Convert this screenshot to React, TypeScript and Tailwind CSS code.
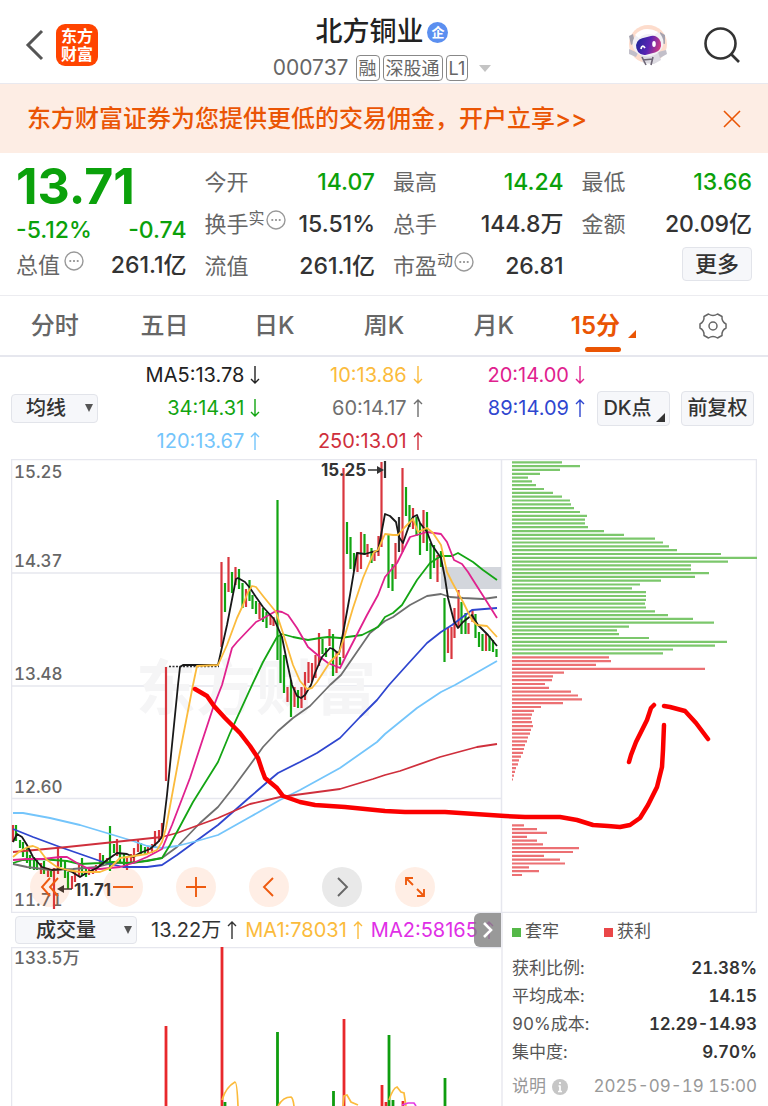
import type { ReactNode } from "react";

const GREEN = "#12a512";
const RED = "#d9363e";

/* Candles as [x, high, low] */
const redCandles: number[][] = [
  [13, 825, 842], [41, 863, 874], [48, 868, 877], [54, 868, 909], [58, 847, 874], [72, 876, 889],
  [75, 872, 882], [79, 865, 877], [89, 867, 875], [93, 867, 874], [96, 865, 873], [100, 853, 867],
  [107, 858, 865], [117, 839, 856], [127, 857, 870], [131, 854, 862], [134, 848, 862], [138, 839, 852],
  [148, 847, 854], [152, 844, 853], [155, 831, 847], [159, 830, 842], [162, 823, 838], [166, 667, 781],
  [221.5, 562, 647], [228.5, 557, 592], [235.5, 567, 585], [246, 589, 607], [259.5, 603, 619],
  [270.5, 615, 625], [273.5, 617, 626], [287.5, 687, 702], [294.5, 687, 707], [301.5, 687, 708],
  [305, 672, 700], [308.5, 662, 683], [312, 663, 682], [315.5, 655, 678], [319, 633, 666],
  [329.5, 629, 646], [336.5, 651, 673], [343.5, 468, 658], [357.5, 552, 572], [361, 532, 569],
  [367.5, 544, 557], [374.5, 551, 561], [378.5, 536, 556], [381.5, 462, 547], [395.5, 543, 579],
  [402.5, 468, 552], [413, 508, 529], [423.5, 510, 543], [437.5, 555, 582], [448, 627, 653],
  [451.5, 627, 659], [454.5, 608, 638], [458.5, 590, 628], [468.5, 623, 634], [472.5, 610, 622],
  [486, 634, 651],
];

const greenCandles: number[][] = [
  [16, 825, 841], [20, 840, 848], [23, 842, 857], [27, 847, 863], [30, 855, 869], [34, 857, 870],
  [37, 858, 870], [44, 861, 874], [51, 870, 877], [61, 856, 867], [65, 860, 878], [68, 872, 889],
  [82, 858, 876], [86, 867, 877], [103, 855, 866], [110, 826, 871], [114, 844, 853], [120, 845, 863],
  [124, 854, 865], [141, 843, 855], [145, 847, 855], [225, 583, 612], [232, 572, 593], [239, 569, 589],
  [242.5, 583, 608], [249.5, 580, 601], [252.5, 595, 609], [256, 601, 614], [263, 608, 622],
  [266.5, 612, 628], [277.5, 500, 660], [280.5, 635, 683], [284, 655, 693], [291, 680, 717],
  [298, 690, 708], [322.5, 639, 654], [326, 648, 657], [333, 634, 676], [340, 657, 665],
  [347, 522, 554], [350.5, 537, 569], [354, 553, 571], [364.5, 534, 555], [371.5, 548, 563],
  [388.5, 535, 588], [392.5, 564, 591], [406, 487, 516], [409.5, 505, 527], [416.5, 517, 536],
  [420, 523, 555], [427, 512, 551], [430.5, 543, 579], [434, 545, 568], [441, 551, 567],
  [444.5, 598, 662], [461.5, 602, 634], [465.5, 613, 634], [475.5, 614, 638], [479, 632, 647],
  [482.5, 634, 651], [489.5, 636, 651], [493, 640, 652], [496.5, 649, 657],
];

const flatCandles: number[][] = [[385, 461, 478], [399, 517, 552]];

const averages = [
  { color: "#6f6f6f", points: "13,864 27,867 50,870 73,869 97,867 113,863 133,863 162,858 177,847 200,823 218,807 233,788 250,765 263,747 278,731 293,718 310,706 330,685 341,675 370,633 385,621 393,617 410,605 427,596 441,594 450,597 463,598 483,599 497,597" },
  { color: "#2f46cf", points: "13,829 33,837 60,847 83,855 103,862 123,867 147,867 162,865 177,855 218,825 250,797 272,778 278,773 300,762 317,753 340,738 360,717 377,700 389,685 407,665 427,643 441,632 452,625 472,610 497,608" },
  { color: "#74c5fb", points: "13,813 23,813 50,818 80,825 110,834 133,841 147,846 162,848 177,846 197,841 218,835 250,817 280,800 300,790 340,768 377,742 385,734 417,708 441,692 455,685 497,661" },
  { color: "#cf2f3c", points: "13,852 67,847 162,837 177,833 218,818 250,804 280,797 340,789 373,779 385,775 400,771 440,757 477,747 497,744" },
  { color: "#14a514", points: "13,863 23,860 40,859 67,861 80,864 100,863 113,862 127,863 147,861 162,858 170,845 193,802 218,762 230,733 252,685 263,662 277,637 282,634 293,637 308,640 320,638 328,637 340,638 362,635 378,627 385,617 393,613 402,605 417,580 430,563 441,556 452,556 458,553 463,556 473,562 483,570 497,580" },
  { color: "#e0218e", points: "13,860 27,859 43,859 60,857 67,857 77,863 87,868 100,869 120,867 133,863 147,857 162,849 172,825 190,778 213,708 222,685 232,648 237,642 256,622 260,620 276,611 282,612 288,615 297,628 308,647 320,657 328,663 340,668 350,648 367,615 378,595 385,577 397,563 410,537 417,535 427,532 441,534 447,542 454,560 462,564 468,572 473,580 487,602 497,618" },
  { color: "#191919", points: "13,842 17,834 22,837 27,845 33,857 42,867 52,870 63,869 72,872 80,877 88,872 97,868 107,860 117,853 127,854 133,857 140,853 150,849 158,842 162,837 167,795 172,745 178,685 180,667 183,665 218,665 227,625 236,579 238,578 245,582 250,588 256,597 263,607 274,619 282,637 287,662 292,685 297,696 301,698 305,695 311,685 315,673 322,657 330,648 333,649 339,654 344,628 350,595 357,553 365,554 372,552 378,551 385,514 390,516 396,522 399,537 403,543 410,523 413,517 417,515 420,523 427,532 432,545 441,558 445,578 448,598 454,621 458,628 463,622 472,615 478,625 488,635 497,646" },
  { color: "#fbbb3c", points: "13,857 20,851 28,847 33,846 38,848 47,860 57,867 67,870 80,872 100,872 110,868 120,858 127,857 147,854 157,850 162,842 166,828 180,752 193,685 197,666 218,665 227,645 237,618 243,605 248,592 252,586 256,587 263,596 276,612 282,630 293,665 300,681 307,689 312,688 317,682 330,662 339,653 345,635 353,608 363,578 374,552 378,550 385,534 393,535 398,535 405,527 410,522 413,519 418,532 427,528 433,533 441,545 447,572 452,582 463,602 472,620 477,625 487,626 497,637" },
];

const trapped = [50, 68, 48, 28, 16, 20, 24, 32, 41, 50, 58, 59, 62, 68, 75, 73, 73, 76, 92, 112, 143, 151, 157, 165, 209, 245, 216, 179, 179, 197, 183, 149, 128, 120, 134, 134, 134, 133, 134, 143, 156, 181, 202, 117, 105, 107, 137, 215, 203, 161, 151];
const profit = [97, 99, 84, 193, 52, 41, 40, 33, 37, 59, 66, 70, 51, 29, 22, 20, 19, 20, 21, 19, 18, 16, 15, 13, 12, 11, 9, 7, 6, 4, 3, 2, 1];
const profitLow = [12, 25, 35, 15, 25, 31, 67, 61, 32, 48, 53, 17, 27, 10];

const sticks = (rows: number[][]) => rows.map(([x, a, b]) => `M${x} ${a}V${b}`).join("");
const bars = (rows: number[], top: number) =>
  rows.map((w, i) => `M512 ${(top + i * 3.82).toFixed(1)}h${w}`).join("");

function Arrow({ up }: { up?: boolean }) {
  return (
    <svg viewBox="0 0 10 20" className="ml-[6px] h-5 w-[10px] shrink-0" fill="none" stroke="currentColor" strokeWidth="1.4">
      <path d={up ? "M5 19V2M1 6l4-4 4 4" : "M5 1v17M1 14l4 4 4-4"} />
    </svg>
  );
}

function Dots() {
  return (
    <svg viewBox="0 0 20 20" className="h-5 w-5 shrink-0" fill="none" stroke="#999">
      <circle cx="10" cy="10" r="9" strokeWidth="1.4" />
      <path d="M5.4 10h1.8M9.100 10h1.8M12.800 10h1.8" strokeWidth="1.8" />
    </svg>
  );
}

function Stat({ label, sup, dots, value, green }: { label: string; sup?: string; dots?: boolean; value: string; green?: boolean }) {
  return (
    <div className="flex h-[42px] items-center justify-between whitespace-nowrap">
      <dt className="flex items-center text-[#666]">
        {label}
        {sup && <span className="mb-3 text-base leading-4">{sup}</span>}
        {dots && <span className="mb-2 ml-px"><Dots /></span>}
      </dt>
      <dd className={green ? "text-[23px] font-medium text-[#0ba10b]" : "text-[23px] font-medium text-[#333]"}>{value}</dd>
    </div>
  );
}

function Average({ text, color, up }: { text: string; color: string; up?: boolean }) {
  return (
    <div className={`flex h-[33px] items-center justify-end ${color}`}>
      {text}
      <Arrow up={up} />
    </div>
  );
}

function RoundButton({ label, gray, children }: { label: string; gray?: boolean; children: ReactNode }) {
  return (
    <button aria-label={label} className={`flex h-10 w-10 items-center justify-center rounded-full ${gray ? "bg-[#e9e9e9] text-[#666]" : "bg-[#ff5a00]/10 text-[#ee5a0f]"}`}>
      <svg viewBox="0 0 24 24" className="h-6 w-6" fill="none" stroke="currentColor" strokeWidth="1.9">{children}</svg>
    </button>
  );
}

function Robot() {
  return (
    <svg viewBox="0 0 40 42" className="h-[42px] w-10">
      <defs>
        <linearGradient id="visor" x1="0" x2="1" y1="0.3" y2="0.7">
          <stop offset="0" stopColor="#23269a" />
          <stop offset="0.5" stopColor="#5a24b4" />
          <stop offset="1" stopColor="#d83f7f" />
        </linearGradient>
      </defs>
      <circle cx="20" cy="20" r="19" fill="#fddccc" />
      <path d="M12 29l18-2 3 9-7 4-11-1z" fill="#dddbe2" />
      <path d="M1 25l9 4-2 4-7-3zM30 28l8-2 1 4-7 4z" fill="#c2bfc9" />
      <path d="M14 33l4 8M25 33l-2 8M15 36l10-1" stroke="#6d6675" strokeWidth="1.6" />
      <path d="M1 12l4-2 2 9-4 2zM32 8l5 3v9l-4-1z" fill="#a5a2ae" />
      <ellipse cx="20" cy="19" rx="15.500" ry="13.500" fill="#f2f1f5" transform="rotate(-12 20 19)" />
      <path d="M7 11Q16 1 30 8l-4 3q-8-3-15 3z" fill="#fff" />
      <rect x="8" y="13" width="25" height="17" rx="8" fill="url(#visor)" transform="rotate(-14 20 21)" />
      <path d="M13 25q1-5 4-1" fill="none" stroke="#fff" strokeWidth="1.8" />
      <ellipse cx="26" cy="20" rx="1.800" ry="3" fill="#fff" />
    </svg>
  );
}

function Chart() {
  return (
    <svg viewBox="11 459 746 454" className="block w-full tabular-nums" fill="none" role="img" aria-label="15分 K线与筹码分布">
      <path d="M11 459.500h746M11 573h490M11 686h490M11 798.500h490M11 912.500h746M11.500 459v454M501.500 459v454M756.500 459v454" stroke="#e6e7ee" strokeWidth="1.5" />
      <text x="136" y="710" fontSize="60" fontWeight="700" fill="#f5f5f6">东方财富</text>
      <rect x="441" y="567" width="60" height="22" fill="#d3d6dc" />
      <g fontSize="17" fontWeight="500" fill="#666">
        <text x="14" y="478">15.25</text>
        <text x="14" y="567">14.37</text>
        <text x="14" y="680">13.48</text>
        <text x="14" y="793">12.60</text>
        <text x="14" y="906">11.71</text>
      </g>
      <path d={sticks(redCandles)} stroke={RED} strokeWidth="2.200" />
      <path d={sticks(greenCandles)} stroke={GREEN} strokeWidth="2.200" />
      <path d={sticks(flatCandles)} stroke="#333" strokeWidth="2.200" />
      <path d="M169 666.500h50" stroke="#333" strokeWidth="1.5" strokeDasharray="2 1.5" />
      {averages.map((a) => (
        <polyline key={a.color} points={a.points} stroke={a.color} strokeWidth="1.800" strokeLinejoin="round" />
      ))}
      <g fontSize="17" fontWeight="700" fill="#333" className="proportional-nums">
        <text x="321" y="476">15.25</text>
        <text x="74" y="896">11.71</text>
      </g>
      <path d="M368 470h12M72 889H60" stroke="#333" strokeWidth="1.500" />
      <path d="M377 466l7 4-7 4zM64 885l-7 4 7 4z" fill="#333" />
      <path d={bars(trapped, 462.3)} stroke="#7cc76c" strokeWidth="2.200" />
      <path d={bars(profit, 657.3) + bars(profitLow, 825.3)} stroke="#ec7073" strokeWidth="2.200" />
      <g stroke="#fb0000" strokeWidth="4.500" strokeLinecap="round" strokeLinejoin="round">
        <path d="M195 689L207 696 214 706 225 718 240 733 250 746 258 758 262 770 265 778 277 788 283 796 300 802 315 805 345 807 385 811 405 812 445 812 505 816 525 817 560 817 577 820 593 825 608 826 620 827 630 825 640 818 648 805 657 787 662 767 663 750 664 725" />
        <path d="M654 705L651 708 647 720 636 742 631 755 629 762M664 706L670 707 685 711 696 723 708 739" />
      </g>
    </svg>
  );
}

function VolumeChart() {
  return (
    <svg viewBox="11 947 490 159" className="block w-full tabular-nums" fill="none" role="img" aria-label="成交量">
      <path d="M11 947.500h490M11.500 947v159" stroke="#e6e7ee" strokeWidth="1.500" />
      <text x="14" y="964" fontSize="17" fontWeight="500" fill="#666">133.5万</text>
      <path d={sticks([[166, 1026, 1106], [222, 947, 1106], [344, 1019, 1106], [382, 1085, 1106], [386, 1102, 1106], [403, 1101, 1106]])} stroke="#e8282c" strokeWidth="2.800" />
      <path d={sticks([[225, 1102, 1106], [277.5, 1032, 1106], [333.5, 1091, 1106], [389, 1035, 1106], [393, 1100, 1106], [445, 1078, 1106]])} stroke="#0f9d0f" strokeWidth="2.800" />
      <path d="M222 1100Q226 1087 235 1082Q237 1082 238 1106M278 1106Q283 1097 291 1097Q293 1098 294 1106M343 1106L344 1096 347 1095 351 1102 358 1105M389 1100Q393 1088 397 1087L401 1092 404 1093 406 1106" stroke="#fbbb3c" strokeWidth="1.700" />
      <path d="M402 1105L408 1103 414 1103 416 1106" stroke="#e33be3" strokeWidth="1.700" />
    </svg>
  );
}

const tabs = ["分时", "五日", "日K", "周K", "月K"];
const costs = [
  ["获利比例:", "21.38%"],
  ["平均成本:", "14.15"],
  ["90%成本:", "12.29-14.93"],
  ["集中度:", "9.70%"],
];

export default function App() {
  return (
    <main className="w-full overflow-hidden bg-white font-['Inter','Noto_Sans_CJK_SC',sans-serif] text-[#333]">
      <header className="grid h-[84px] grid-cols-[1fr_auto_1fr] items-center border-b border-[#e9e9ef] pr-7 pl-6">
        <div className="flex items-center gap-3 pt-1">
          <button aria-label="返回">
            <svg viewBox="0 0 20 32" className="h-8 w-5" fill="none" stroke="#555" strokeWidth="3"><path d="M18 2L4 16l14 14" /></svg>
          </button>
          <a href="#home" className="flex h-[42px] w-[42px] items-center justify-center rounded-[9px] bg-[#ff4400]">
            <span className="w-8 text-base leading-[18px] font-bold break-all text-white">东方财富</span>
          </a>
        </div>
        <div className="flex flex-col items-center pt-[14px]">
          <h1 className="flex h-9 items-center gap-1 text-[27px] font-medium text-[#222]">
            北方铜业
            <span className="flex h-[21px] w-[21px] items-center justify-center rounded-full bg-[#5b8ff0] text-[13px] leading-none font-bold text-white">企</span>
          </h1>
          <div className="flex h-9 items-center gap-[3px] text-[18px] text-[#666]">
            <span className="mr-1 text-[21px]">000737</span>
            <span className="flex h-[26px] items-center rounded-[4px] border border-[#888] px-[2px]">融</span>
            <span className="flex h-[26px] items-center rounded-[4px] border border-[#888] px-[2px]">深股通</span>
            <span className="flex h-[26px] items-center rounded-[4px] border border-[#888] px-[2px]">L1</span>
            <svg viewBox="0 0 12 7" className="ml-2 h-[7px] w-3" fill="#c4c4c4"><path d="M0 0h12L6 7z" /></svg>
          </div>
        </div>
        <div className="flex items-center justify-end gap-9 pt-1">
          <button aria-label="智能助手"><Robot /></button>
          <button aria-label="搜索">
            <svg viewBox="0 0 36 38" className="h-[38px] w-9" fill="none" stroke="#333" strokeWidth="2.600"><circle cx="16.500" cy="17.500" r="15" /><path d="M27 28l8 8" /></svg>
          </button>
        </div>
      </header>

      <section className="flex h-[69px] items-center justify-between bg-[#fdede4] px-[27px] text-[#ea5504]">
        <a href="#open" className="text-2xl font-medium">东方财富证券为您提供更低的交易佣金，开户立享&gt;&gt;</a>
        <button aria-label="关闭">
          <svg viewBox="0 0 18 18" className="h-[18px] w-[18px]" fill="none" stroke="currentColor" strokeWidth="1.600"><path d="M1 1l16 16M17 1L1 17" /></svg>
        </button>
      </section>

      <section className="grid h-[143px] grid-cols-4 gap-x-[18px] border-b border-[#ececf0] px-4 pt-2 text-[22px]">
        <div className="whitespace-nowrap text-[#0ba10b]">
          <div className="flex h-[50px] items-center text-[50px] font-bold">13.71</div>
          <div className="flex h-[38px] items-center justify-between text-[23px] font-medium">
            <span>-5.12%</span>
            <span>-0.74</span>
          </div>
          <div className="flex h-8 items-center justify-between">
            <span className="flex items-center gap-1 text-[#666]">总值<span className="mb-2"><Dots /></span></span>
            <span className="text-[23px] font-medium text-[#333]">261.1亿</span>
          </div>
        </div>
        <dl>
          <Stat label="今开" value="14.07" green />
          <Stat label="换手" sup="实" dots value="15.51%" />
          <Stat label="流值" value="261.1亿" />
        </dl>
        <dl>
          <Stat label="最高" value="14.24" green />
          <Stat label="总手" value="144.8万" />
          <Stat label="市盈" sup="动" dots value="26.81" />
        </dl>
        <div>
          <dl>
            <Stat label="最低" value="13.66" green />
            <Stat label="金额" value="20.09亿" />
          </dl>
          <div className="flex justify-end pt-[2px]">
            <button className="h-[34px] w-[70px] rounded-[4px] border border-[#e2e4ea] bg-[#f6f7fa] leading-none font-medium">更多</button>
          </div>
        </div>
      </section>

      <nav className="grid h-[61px] grid-cols-7 border-b-2 border-[#e6e7ee] pt-px text-2xl font-medium text-[#666]">
        {tabs.map((t) => (
          <button key={t}>{t}</button>
        ))}
        <button className="relative flex items-center justify-center gap-2 text-[#ea5504]">
          <span className="font-semibold">15分</span>
          <svg viewBox="0 0 8 8" className="mt-4 h-2 w-2" fill="currentColor"><path d="M8 0v8H0z" /></svg>
          <span className="absolute bottom-[3px] left-1/2 h-[5px] w-9 -translate-x-1/2 rounded-full bg-[#ea5504]" />
        </button>
        <button aria-label="设置" className="flex items-center justify-center">
          <svg viewBox="0 0 28 28" className="h-7 w-7" fill="none" stroke="#666" strokeWidth="1.500" strokeLinejoin="round">
            <path d="M9.500 2Q14 5 18.500 2L23 4.500Q22.500 9.500 27 12v4q-4.500 2.500-4 7.500L18.500 26Q14 23 9.500 26L5 23.500Q5.500 18.500 1 16v-4q4.500-2.500 4-7.500z" />
            <circle cx="14" cy="14" r="4" />
          </svg>
        </button>
      </nav>

      <section className="flex h-[102px] items-center pr-[14px] pl-[11px] whitespace-nowrap">
        <div className="relative w-[87px]">
          <select aria-label="指标" className="h-[29px] w-full appearance-none rounded-[4px] border border-[#e2e4ea] bg-[#f6f7fa] pl-[14px] text-xl leading-none font-medium">
            <option>均线</option>
          </select>
          <svg viewBox="0 0 8 8" className="pointer-events-none absolute top-[10px] right-[5px] h-2 w-2" fill="#555"><path d="M0 0h8L4 8z" /></svg>
        </div>
        <div className="grid flex-1 grid-cols-3 text-xl">
          <Average text="MA5:13.78" color="text-[#222]" />
          <Average text="10:13.86" color="text-[#fbbb3c]" />
          <Average text="20:14.00" color="text-[#e0218e]" />
          <Average text="34:14.31" color="text-[#12a512]" />
          <Average text="60:14.17" color="text-[#6f6f6f]" up />
          <Average text="89:14.09" color="text-[#2f46cf]" up />
          <Average text="120:13.67" color="text-[#74c5fb]" up />
          <Average text="250:13.01" color="text-[#cf2f3c]" up />
        </div>
        <button className="relative ml-3 h-[35px] w-[73px] rounded-[4px] border border-[#e2e4ea] bg-[#f6f7fa] pr-3 text-xl font-medium">
          DK点
          <svg viewBox="0 0 9 9" className="absolute right-1 bottom-[3px] h-[9px] w-[9px]" fill="#333"><path d="M9 0v9H0z" /></svg>
        </button>
        <button className="ml-[11px] h-[35px] w-[73px] rounded-[4px] border border-[#e2e4ea] bg-[#f6f7fa] text-xl font-medium">前复权</button>
      </section>

      <section className="relative mx-[11px]">
        <Chart />
        <div className="absolute bottom-[6px] left-[19px] flex gap-[33px]">
          <RoundButton label="最左"><path d="M12 3l-8 9 8 9M20 3l-8 9 8 9" /></RoundButton>
          <RoundButton label="缩小"><path d="M2 12h20" /></RoundButton>
          <RoundButton label="放大"><path d="M2 12h20M12 2v20" /></RoundButton>
          <RoundButton label="左移"><path d="M16 3l-9 9 9 9" /></RoundButton>
          <RoundButton label="右移" gray><path d="M8 3l9 9-9 9" /></RoundButton>
          <RoundButton label="全屏"><path d="M10 3H3v7M3 3l7 7M14 21h7v-7M21 21l-7-7" /></RoundButton>
        </div>
      </section>

      <section className="mx-[11px] grid grid-cols-[490fr_256fr]">
        <div className="min-w-0">
          <div className="relative flex h-[34px] items-center overflow-hidden pl-1 text-xl whitespace-nowrap">
            <div className="relative w-[122px] shrink-0">
              <select aria-label="副图指标" className="h-7 w-full appearance-none rounded-[4px] border border-[#e2e4ea] bg-[#f6f7fa] pl-5 text-xl leading-none font-medium">
                <option>成交量</option>
              </select>
              <svg viewBox="0 0 8 8" className="pointer-events-none absolute top-[10px] right-[5px] h-2 w-2" fill="#555"><path d="M0 0h8L4 8z" /></svg>
            </div>
            <span className="ml-[14px] flex items-center">13.22万<Arrow up /></span>
            <span className="ml-2 flex items-center text-[#fbbb3c]">MA1:78031<Arrow up /></span>
            <span className="ml-2 flex items-center text-[#e02fe6]">MA2:58165<Arrow up /></span>
            <button aria-label="更多指标" className="absolute top-0 right-0 flex h-full w-[27px] items-center justify-center rounded-l-[6px] bg-[#808080]/80">
              <svg viewBox="0 0 10 16" className="h-4 w-[10px]" fill="none" stroke="#fff" strokeWidth="2.600"><path d="M1 1l7 7-7 7" /></svg>
            </button>
          </div>
          <VolumeChart />
        </div>
        <aside className="border-l-2 border-[#eeeef3] pl-[9px] text-[17px] text-[#555] tabular-nums">
          <div className="flex h-[38px] items-center gap-[45px]">
            <span className="flex items-center gap-1"><i className="h-[9px] w-[9px] bg-[#55b848]" />套牢</span>
            <span className="flex items-center gap-1"><i className="h-[9px] w-[9px] bg-[#ea4648]" />获利</span>
          </div>
          <dl className="pt-1">
            {costs.map(([k, v]) => (
              <div key={k} className="flex h-7 items-center justify-between">
                <dt>{k}</dt>
                <dd className="font-semibold text-[#333]">{v}</dd>
              </div>
            ))}
          </dl>
          <div className="flex h-10 items-center justify-between text-[#999]">
            <a href="#info" className="flex items-center gap-[6px]">
              说明
              <svg viewBox="0 0 16 16" className="h-4 w-4"><circle cx="8" cy="8" r="8" fill="#c6c6c6" /><path d="M8 3v2M8 6.500v6M6.500 7H8M6 12.500h4" stroke="#fff" strokeWidth="1.700" /></svg>
            </a>
            <time>2025-09-19 15:00</time>
          </div>
        </aside>
      </section>
    </main>
  );
}
